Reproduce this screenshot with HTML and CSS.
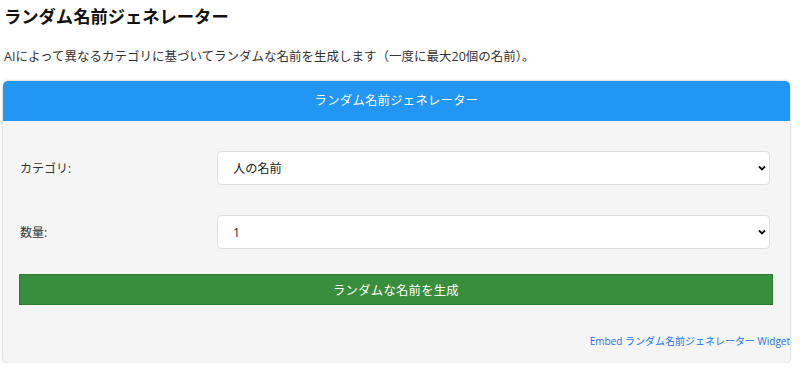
FILE: index.html
```html
<!DOCTYPE html>
<html lang="ja">
<head>
<meta charset="utf-8">
<title>ランダム名前ジェネレーター</title>
<link rel="stylesheet" href="styles.css">
</head>
<body>
<div class="page">
  <h1 class="title">ランダム名前ジェネレーター</h1>
  <p class="desc">AIによって異なるカテゴリに基づいてランダムな名前を生成します（一度に最大20個の名前）。</p>
  <div class="card">
    <div class="card-header">ランダム名前ジェネレーター</div>
    <div class="card-body">
      <div class="row">
        <label class="label" for="cat">カテゴリ:</label>
        <select class="select" id="cat"><option>人の名前</option></select>
      </div>
      <div class="row">
        <label class="label" for="num">数量:</label>
        <select class="select" id="num"><option>1</option></select>
      </div>
      <button class="btn" type="button">ランダムな名前を生成</button>
    </div>
    <div class="card-footer"><a class="embed" href="#">Embed ランダム名前ジェネレーター Widget</a></div>
  </div>
</div>
</body>
</html>
```
FILE: styles.css
```css
html, body {
  margin: 0;
  padding: 0;
  background: #fff;
}
body {
  font-family: "Open Sans", "Noto Sans CJK JP", sans-serif;
  font-size: 12px;
  color: #333;
}
.page {
  padding: 0 10px 0 3px;
}
.title {
  margin: 6px 0 0 1px;
  font-size: 17.3px;
  line-height: 22px;
  font-weight: 700;
  color: #111;
}
.desc {
  margin: 20px 0 0 1px;
  line-height: 18px;
  font-size: 12.5px;
  color: #333;
}
.card {
  margin-top: 15px;
  background: #f5f5f5;
  border-radius: 5px;
  box-shadow: 0 0 3px rgba(0, 0, 0, 0.28);
  overflow: hidden;
}
.card-header {
  background: #2196f3;
  color: #fff;
  height: 40px;
  line-height: 40px;
  text-align: center;
  font-size: 12.3px;
  letter-spacing: 0.3px;
}
.card-body {
  padding: 0 17px 0 16px;
}
.row {
  display: flex;
  align-items: center;
  margin-top: 30px;
}
.label {
  width: 198px;
  flex: none;
  padding-left: 1px;
  box-sizing: border-box;
  color: #333;
}
.select {
  flex: 1;
  margin-right: 3px;
  height: 34px;
  box-sizing: border-box;
  border: 1px solid #ddd;
  border-radius: 4px;
  background: #fff url("data:image/svg+xml,%3Csvg xmlns='http://www.w3.org/2000/svg' width='8' height='6' viewBox='0 0 8 6'%3E%3Cpath d='M1 1.5 L4 4.5 L7 1.5' fill='none' stroke='%23111' stroke-width='1.8'/%3E%3C/svg%3E") no-repeat right 3px center;
  appearance: none;
  -webkit-appearance: none;
  padding: 0 20px 0 15px;
  font-family: "Open Sans", "Noto Sans CJK JP", sans-serif;
  font-size: 12.2px;
  color: #222;
}
.btn {
  display: block;
  width: 100%;
  margin-top: 25px;
  height: 31px;
  border: 0;
  border-radius: 0;
  background: #388e3c;
  color: #fff;
  font-family: "Open Sans", "Noto Sans CJK JP", sans-serif;
  font-size: 12.3px;
  letter-spacing: 0.3px;
  box-shadow: inset 0 0 0 1px #2e7d32;
}
.card-footer {
  margin-top: 28px;
  padding-bottom: 14px;
  text-align: right;
  line-height: 16px;
}
.embed {
  font-size: 10px;
  color: #1a73e8;
  text-decoration: none;
}
```
